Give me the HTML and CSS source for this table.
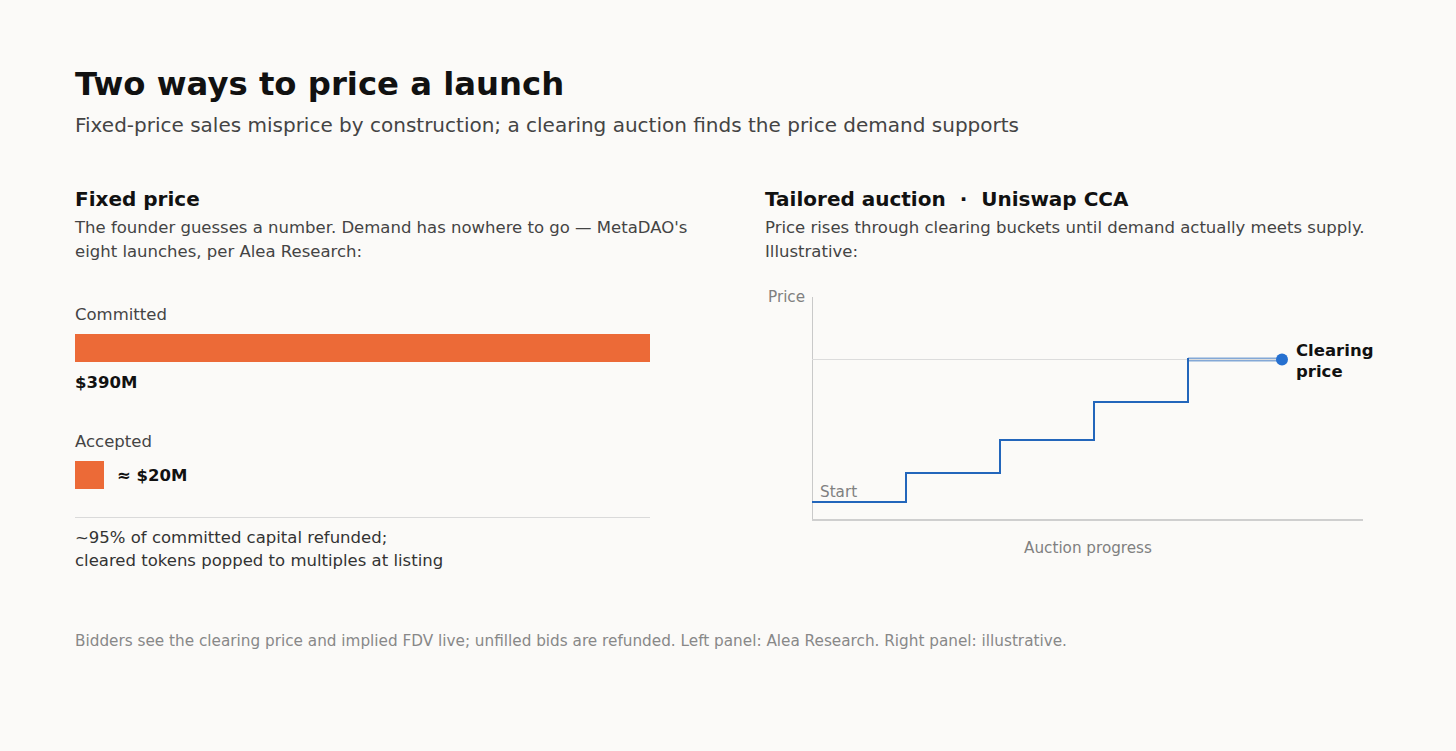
FILE: index.html
```html
<!DOCTYPE html>
<html lang="en">
<head>
<meta charset="utf-8">
<title>Two ways to price a launch</title>
<link rel="stylesheet" href="styles.css">
</head>
<body>
<main class="page">
  <h1 class="title">Two ways to price a launch</h1>
  <p class="subtitle">Fixed-price sales misprice by construction; a clearing auction finds the price demand supports</p>

  <div class="panels">
    <section class="panel panel-left">
      <h2 class="panel-title">Fixed price</h2>
      <p class="panel-desc">The founder guesses a number. Demand has nowhere to go — MetaDAO's eight launches, per Alea Research:</p>

      <div class="bar-label bar-label-first">Committed</div>
      <div class="bar bar-full"></div>
      <div class="bar-value">$390M</div>

      <div class="bar-label bar-label-second">Accepted</div>
      <div class="bar-row">
        <div class="bar bar-small"></div>
        <span class="bar-value-inline">≈ $20M</span>
      </div>

      <hr class="divider">
      <p class="note">~95% of committed capital refunded;<br>cleared tokens popped to multiples at listing</p>
    </section>

    <section class="panel panel-right">
      <h2 class="panel-title">Tailored auction &nbsp;·&nbsp; Uniswap CCA</h2>
      <p class="panel-desc">Price rises through clearing buckets until demand actually meets supply. Illustrative:</p>

      <svg class="chart" width="616" height="282" viewBox="0 0 616 282" xmlns="http://www.w3.org/2000/svg">
        <line x1="47.5" y1="17" x2="47.5" y2="240" stroke="#c9c9c9" stroke-width="1"/>
        <line x1="47" y1="240" x2="598" y2="240" stroke="#cfcfcf" stroke-width="2"/>
        <path d="M47 222 H141 V193 H235 V160 H329 V122 H423 V79" fill="none" stroke="#2366bb" stroke-width="2"/>
        <line x1="423" y1="79.5" x2="517" y2="79.5" stroke="#2366bb" stroke-width="4" opacity="0.55"/>
        <line x1="47" y1="79.5" x2="517" y2="79.5" stroke="#dcdcdc" stroke-width="1"/>
        <line x1="423" y1="78" x2="423" y2="81" stroke="#2366bb" stroke-width="2"/>
        <circle cx="517" cy="79.5" r="6" fill="#2670d0"/>
        <text x="3" y="22" class="axis-text">Price</text>
        <text x="55" y="217" class="axis-text">Start</text>
        <text x="323" y="273" class="axis-text" text-anchor="middle">Auction progress</text>
        <text x="531" y="76" class="clear-text">Clearing</text>
        <text x="531" y="97" class="clear-text">price</text>
      </svg>
    </section>
  </div>

  <p class="footer">Bidders see the clearing price and implied FDV live; unfilled bids are refunded. Left panel: Alea Research. Right panel: illustrative.</p>
</main>
</body>
</html>
```

FILE: styles.css
```css
html, body {
  margin: 0;
  padding: 0;
  background: #fbfaf8;
}

body {
  font-family: "DejaVu Sans", "Liberation Sans", sans-serif;
  color: #111;
}

.page {
  padding: 64px 75px 0 75px;
}

.title {
  margin: 0;
  font-size: 32.3px;
  line-height: 40px;
  font-weight: bold;
  color: #111;
}

.subtitle {
  margin: 7px 0 0 0;
  font-size: 20px;
  line-height: 28px;
  color: #444;
}

.panels {
  display: grid;
  grid-template-columns: 650px 616px;
  column-gap: 40px;
  margin-top: 46px;
}

.panel-title {
  margin: 0;
  font-size: 20px;
  line-height: 28px;
  font-weight: bold;
  color: #111;
}

.panel-desc {
  margin: 3px 0 0 0;
  font-size: 16.5px;
  line-height: 24px;
  color: #444;
}

.bar-label {
  font-size: 16.5px;
  line-height: 24px;
  color: #444;
}

.bar-label-first {
  margin-top: 39px;
}

.bar-label-second {
  margin-top: 35px;
}

.bar {
  background: #ec6a37;
  height: 28px;
}

.bar-full {
  width: 575px;
  margin-top: 7px;
}

.bar-value {
  margin-top: 9px;
  font-size: 16.5px;
  line-height: 24px;
  font-weight: bold;
  color: #111;
}

.bar-row {
  display: flex;
  align-items: center;
  gap: 13px;
  margin-top: 7px;
}

.bar-small {
  width: 29px;
}

.bar-value-inline {
  font-size: 16.5px;
  font-weight: bold;
  color: #111;
}

.divider {
  width: 575px;
  margin: 28px 0 0 0;
  border: 0;
  border-top: 1px solid #dadada;
  height: 0;
}

.note {
  margin: 8px 0 0 0;
  font-size: 16.5px;
  line-height: 23px;
  color: #333;
}

.chart {
  display: block;
  margin-top: 16px;
}

.axis-text {
  font-family: "DejaVu Sans", sans-serif;
  font-size: 15.2px;
  fill: #808080;
}

.clear-text {
  font-family: "DejaVu Sans", sans-serif;
  font-size: 16.5px;
  font-weight: bold;
  fill: #111;
}

.footer {
  margin: 58px 0 0 0;
  font-size: 15.25px;
  line-height: 22px;
  color: #888;
}
```
